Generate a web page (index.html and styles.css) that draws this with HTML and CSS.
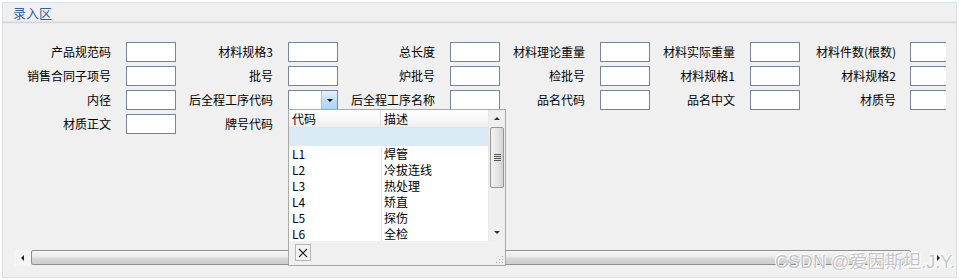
FILE: index.html
```html
<!DOCTYPE html>
<html lang="zh-CN">
<head>
<meta charset="utf-8">
<title>录入区</title>
<link rel="stylesheet" href="styles.css">
</head>
<body>
<div class="panel">
  <div class="panel-head"><span class="panel-title">录入区</span></div>
  <div class="panel-body">
    <div class="scroll-view">
      <div class="form-grid">
        <label class="lbl">产品规范码</label><div class="inp"></div>
        <label class="lbl">材料规格3</label><div class="inp"></div>
        <label class="lbl">总长度</label><div class="inp"></div>
        <label class="lbl">材料理论重量</label><div class="inp"></div>
        <label class="lbl">材料实际重量</label><div class="inp"></div>
        <label class="lbl lbl-last">材料件数(根数)</label><div class="inp"></div>

        <label class="lbl">销售合同子项号</label><div class="inp"></div>
        <label class="lbl">批号</label><div class="inp"></div>
        <label class="lbl">炉批号</label><div class="inp"></div>
        <label class="lbl">检批号</label><div class="inp"></div>
        <label class="lbl">材料规格1</label><div class="inp"></div>
        <label class="lbl lbl-last">材料规格2</label><div class="inp"></div>

        <label class="lbl">内径</label><div class="inp"></div>
        <label class="lbl">后全程工序代码</label>
        <div class="combo">
          <div class="combo-text"></div>
          <div class="combo-btn"><span class="tri-down"></span></div>
          <div class="popup">
            <div class="popup-main">
              <div class="grid-table">
                <div class="gt-head"><div class="gt-c1">代码</div><div class="gt-c2">描述</div></div>
                <div class="gt-row gt-sel"><div class="gt-c1"></div><div class="gt-c2"></div></div>
                <div class="gt-row"><div class="gt-c1">L1</div><div class="gt-c2">焊管</div></div>
                <div class="gt-row"><div class="gt-c1">L2</div><div class="gt-c2">冷拔连线</div></div>
                <div class="gt-row"><div class="gt-c1">L3</div><div class="gt-c2">热处理</div></div>
                <div class="gt-row"><div class="gt-c1">L4</div><div class="gt-c2">矫直</div></div>
                <div class="gt-row"><div class="gt-c1">L5</div><div class="gt-c2">探伤</div></div>
                <div class="gt-row"><div class="gt-c1">L6</div><div class="gt-c2">全检</div></div>
              </div>
              <div class="vscroll">
                <div class="vs-btn"><span class="tri-up-s"></span></div>
                <div class="vs-thumb"><span class="grip"></span></div>
                <div class="vs-track"></div>
                <div class="vs-btn"><span class="tri-down-s"></span></div>
              </div>
            </div>
            <div class="popup-foot">
              <div class="close-btn">
                <svg width="10" height="10" viewBox="0 0 10 10"><path d="M1 1 L9 9 M9 1 L1 9" stroke="#222" stroke-width="1.1" fill="none"/></svg>
              </div>
              <svg class="resize-grip" width="9" height="9" viewBox="0 0 9 9">
                <rect x="7" y="1" width="1" height="1" fill="#9a9a9a"/>
                <rect x="4" y="4" width="1" height="1" fill="#9a9a9a"/>
                <rect x="7" y="4" width="1" height="1" fill="#9a9a9a"/>
                <rect x="1" y="7" width="1" height="1" fill="#9a9a9a"/>
                <rect x="4" y="7" width="1" height="1" fill="#9a9a9a"/>
                <rect x="7" y="7" width="1" height="1" fill="#9a9a9a"/>
              </svg>
            </div>
          </div>
        </div>
        <label class="lbl">后全程工序名称</label><div class="inp"></div>
        <label class="lbl">品名代码</label><div class="inp"></div>
        <label class="lbl">品名中文</label><div class="inp"></div>
        <label class="lbl lbl-last">材质号</label><div class="inp"></div>

        <label class="lbl">材质正文</label><div class="inp"></div>
        <label class="lbl">牌号代码</label><div class="inp"></div>
      </div>
    </div>
    <div class="hscroll">
      <div class="hs-btn"><span class="tri-left"></span></div>
      <div class="hs-thumb"></div>
      <div class="hs-track"></div>
      <div class="hs-btn"><span class="tri-right"></span></div>
    </div>
  </div>
  <div class="watermark">CSDN @爱因斯坦.J.Y.</div>
</div>
</body>
</html>
```

FILE: styles.css
```css
* { box-sizing: border-box; }

html, body {
  margin: 0;
  padding: 0;
  background: #ffffff;
}

body {
  font-family: "Noto Sans CJK SC", "Noto Sans", sans-serif;
  font-size: 12px;
  color: #000;
  padding: 2px;
  width: 959px;
  height: 280px;
  overflow: hidden;
}

.panel {
  position: relative;
  width: 955px;
  height: 276px;
  border: 1px solid #d8e0e8;
  background: #f0f0f0;
  overflow: hidden;
}

.panel-head {
  height: 19px;
  padding-left: 10px;
  display: flex;
  align-items: center;
  box-shadow: 0 1px 1px 0 #d6d6d6;
  border-bottom: 1px solid #e2e2e2;
}

.panel-title {
  color: #3062a0;
  font-size: 13px;
  line-height: 18px;
  padding-top: 1px;
}

.panel-body {
  padding: 0 10px 0 11px;
}

.scroll-view {
  width: 932px;
  height: 228px;
  overflow: visible;
  position: relative;
}

.form-grid {
  padding-top: 20px;
  display: grid;
  grid-template-columns: 112px 50px 112px 50px 112px 50px 100px 50px 100px 50px 110px 36px;
  grid-auto-rows: 20px;
  row-gap: 4px;
}

.lbl {
  text-align: right;
  padding-right: 15px;
  line-height: 20px;
  white-space: nowrap;
}

.lbl-last { padding-right: 14px; }

.inp {
  height: 20px;
  background: #fff;
  border: 1px solid #76859a;
  width: 50px;
}

.form-grid > .inp:nth-child(12n) {
  width: 36px;
  border-right: 0;
}

.combo {
  position: relative;
  height: 20px;
  width: 50px;
  background: #fff;
  border: 1px solid #76859a;
  display: flex;
  z-index: 5;
}

.combo-text { flex: 1; }

.combo-btn {
  width: 16px;
  background: linear-gradient(#e3f2fc, #bfe1f7 50%, #a9d6f4);
  border-left: 1px solid #9ec6e4;
  display: flex;
  align-items: center;
  justify-content: center;
}

.tri-down {
  width: 0; height: 0;
  border-left: 3px solid transparent;
  border-right: 3px solid transparent;
  border-top: 3px solid #000;
  margin-top: 1px;
}

.popup {
  position: absolute;
  top: 18px;
  left: -1px;
  width: 218px;
  height: 157px;
  border: 1px solid #a9a9a9;
  background: #f0f0f0;
  display: flex;
  flex-direction: column;
}

.popup-main {
  display: flex;
  height: 131px;
  background: #fff;
}

.grid-table {
  width: 199px;
  overflow: hidden;
  background:
    linear-gradient(#e6e6e6, #e6e6e6) 92px 0 / 1px 100% no-repeat,
    #fff;
}

.gt-head {
  display: flex;
  height: 18px;
  line-height: 18px;
  background: linear-gradient(#ffffff, #f7f7f7 60%, #eeeeee);
  border-bottom: 1px solid #e2e2e2;
}

.gt-head .gt-c1 { border-right: 1px solid #dcdcdc; }

.gt-row {
  display: flex;
  height: 16px;
  line-height: 16px;
}

.gt-sel {
  height: 18px;
  background: #daebf6;
}

.gt-c1 {
  width: 92px;
  padding-left: 3px;
}

.gt-c2 {
  flex: 1;
  padding-left: 3px;
}

.vscroll {
  width: 17px;
  background: #efefef;
  border-left: 1px solid #e8e8e8;
  display: flex;
  flex-direction: column;
}

.vs-btn {
  height: 17px;
  display: flex;
  align-items: center;
  justify-content: center;
}

.tri-up-s {
  width: 0; height: 0;
  border-left: 3px solid transparent;
  border-right: 3px solid transparent;
  border-bottom: 3px solid #333;
}

.tri-down-s {
  width: 0; height: 0;
  border-left: 3px solid transparent;
  border-right: 3px solid transparent;
  border-top: 3px solid #333;
}

.vs-thumb {
  height: 61px;
  margin: 0 1px;
  border: 1px solid #959595;
  border-radius: 2px;
  background: linear-gradient(90deg, #f2f2f2, #e6e6e6 50%, #d4d4d4);
  display: flex;
  align-items: center;
  justify-content: center;
}

.grip {
  width: 7px;
  height: 7px;
  background: repeating-linear-gradient(#555 0 1px, transparent 1px 2px);
}

.vs-track { flex: 1; }

.popup-foot {
  flex: 1;
  position: relative;
  padding: 3px 0 0 6px;
}

.close-btn {
  width: 16px;
  height: 17px;
  border: 1px solid #b5b5b5;
  background: #f3f3f3;
  display: flex;
  align-items: center;
  justify-content: center;
}

.resize-grip {
  position: absolute;
  right: 1px;
  bottom: 1px;
}

.hscroll {
  width: 932px;
  height: 16px;
  display: flex;
  background: #f0f0f0;
}

.hs-btn {
  width: 17px;
  display: flex;
  align-items: center;
  justify-content: center;
  background: #f4f4f4;
}

.hs-btn:last-child { width: 16px; }

.tri-left {
  width: 0; height: 0;
  border-top: 3px solid transparent;
  border-bottom: 3px solid transparent;
  border-right: 3px solid #222;
}

.tri-right {
  width: 0; height: 0;
  border-top: 3px solid transparent;
  border-bottom: 3px solid transparent;
  border-left: 3px solid #222;
}

.hs-thumb {
  width: 880px;
  height: 15px;
  border: 1px solid #8e8e8e;
  border-radius: 2px;
  background: linear-gradient(#f6f6f6, #e9e9e9 45%, #d6d6d6 60%, #cdcdcd);
}

.hs-track { flex: 1; }

.watermark {
  position: absolute;
  right: 1px;
  bottom: 5px;
  font-family: "Liberation Sans", "Noto Sans CJK SC", sans-serif;
  font-size: 18px;
  line-height: 20px;
  color: #c4c4c4;
  text-shadow: 0 0 1px #fff, 1px 1px 0 #fff, -1px -1px 0 #fff;
  z-index: 10;
}
```
